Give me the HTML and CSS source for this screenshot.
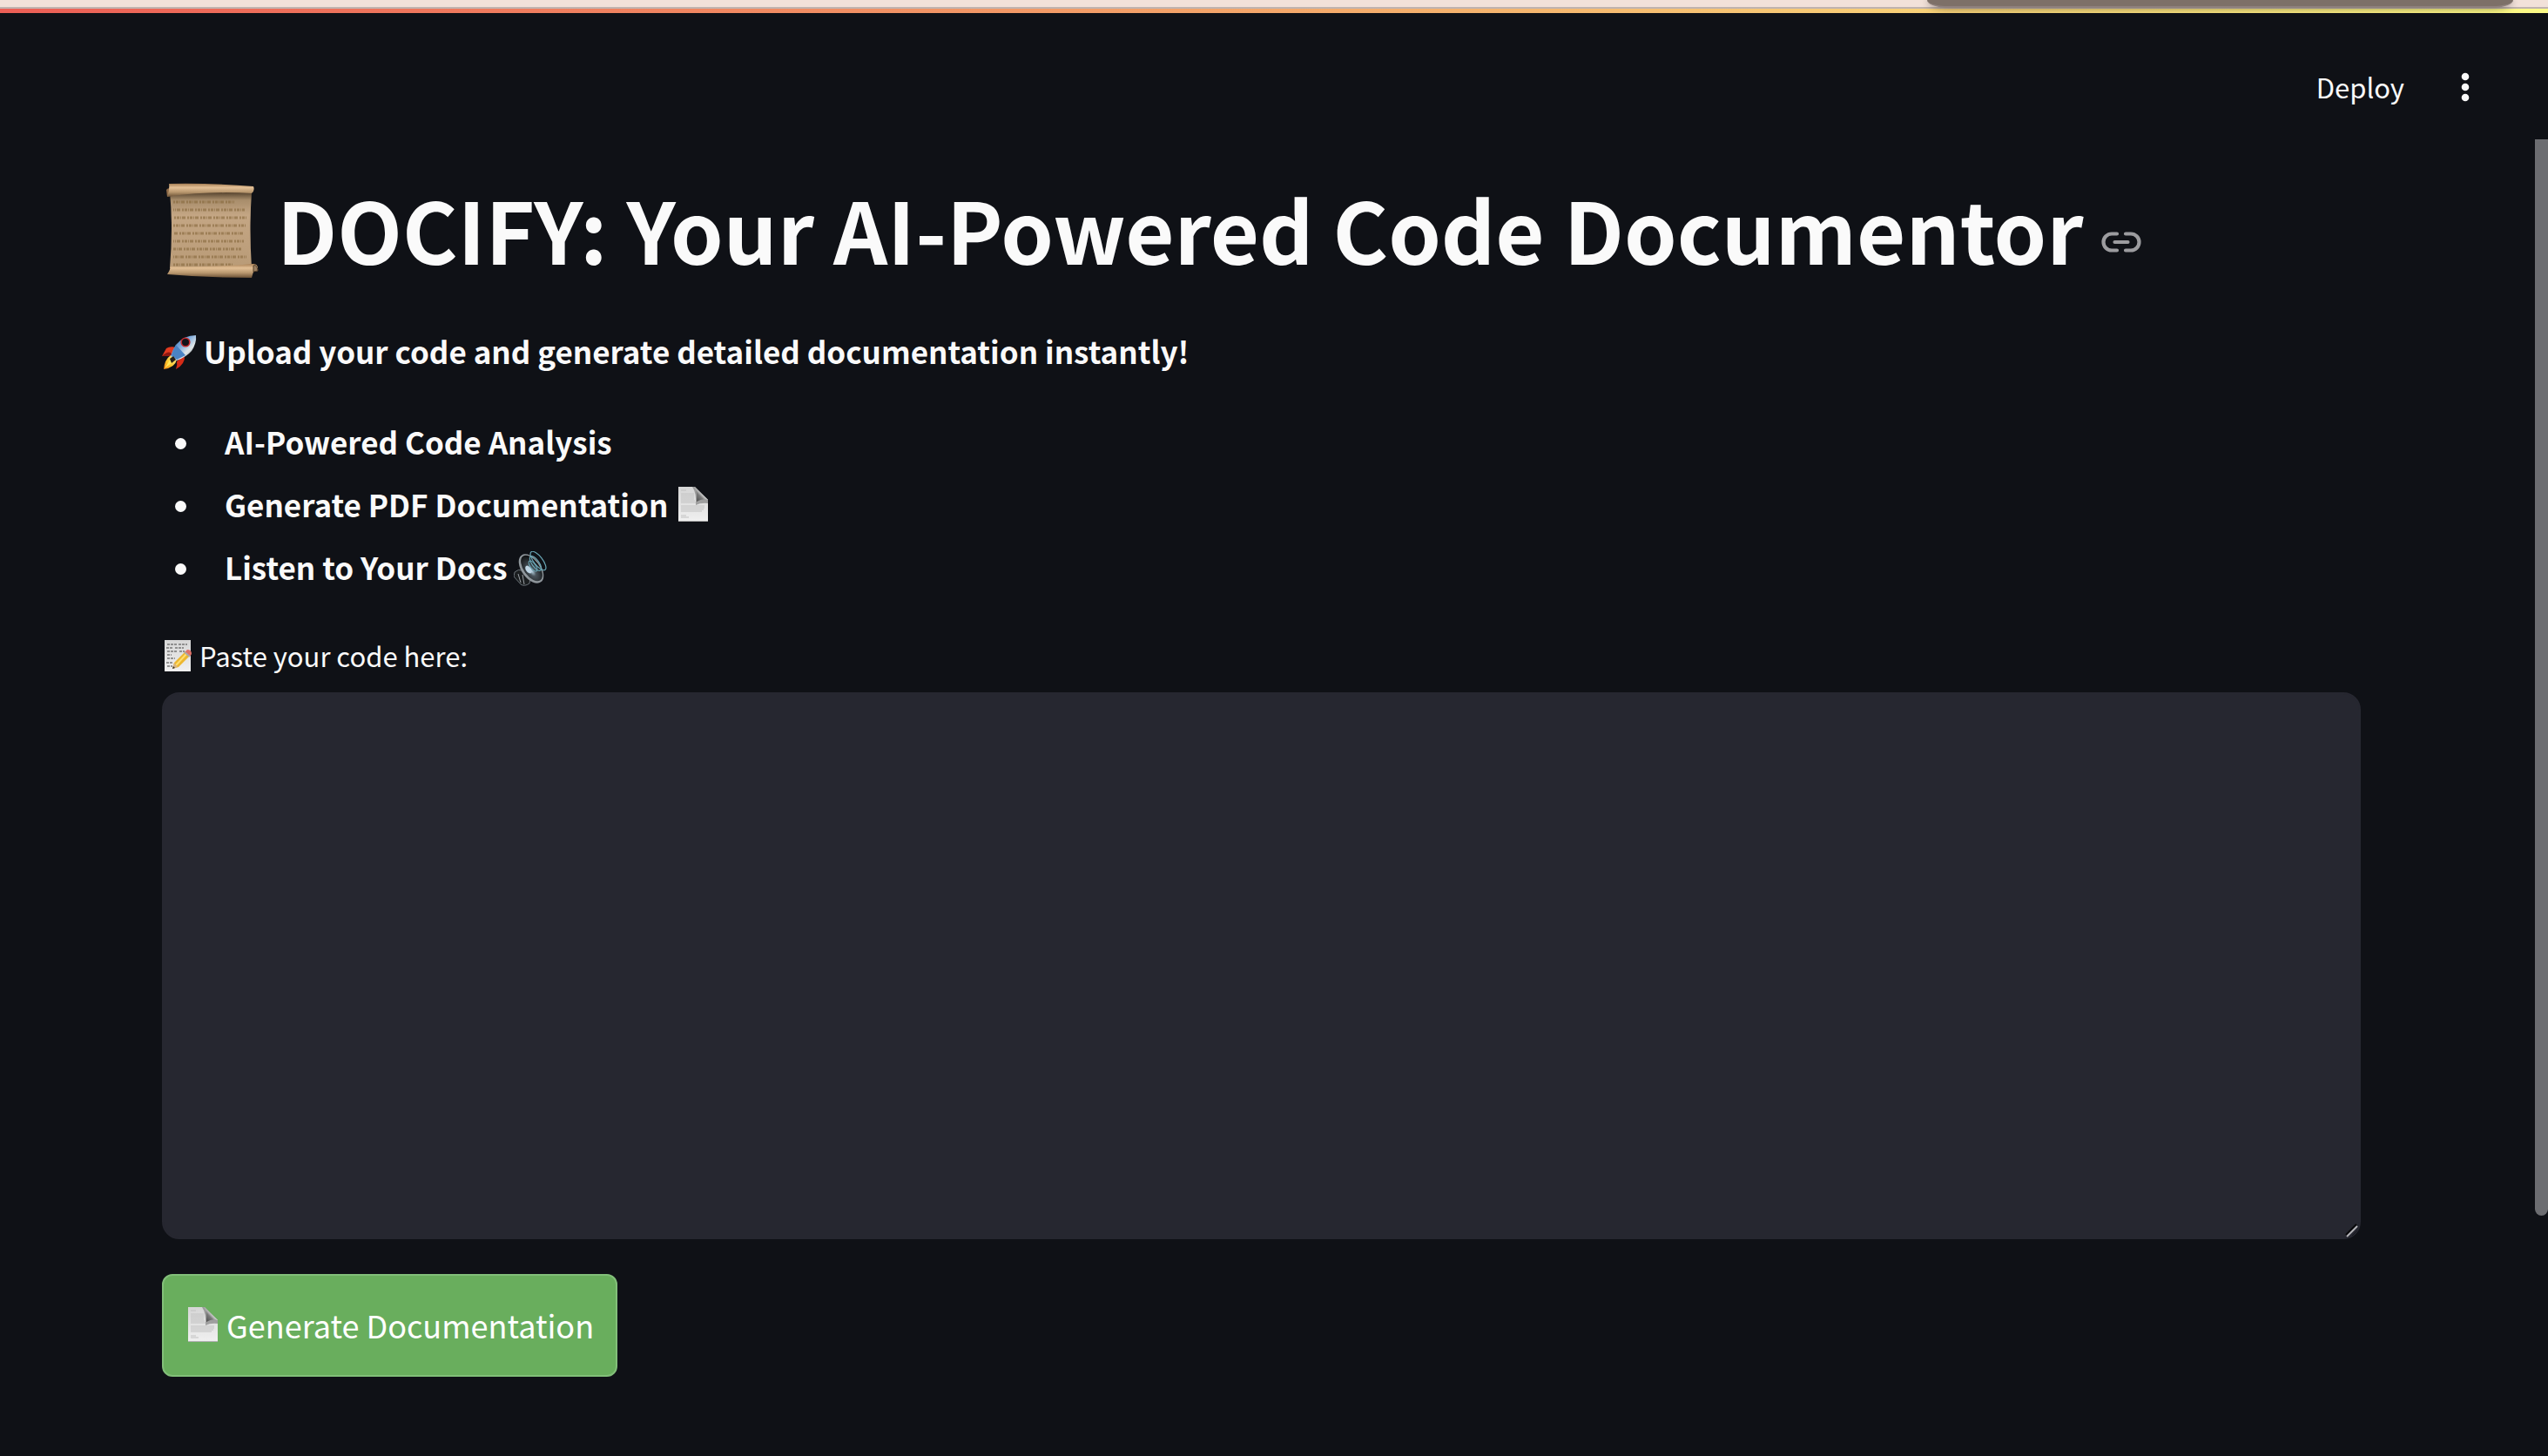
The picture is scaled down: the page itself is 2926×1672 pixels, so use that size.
FILE: index.html
```
<!DOCTYPE html>
<html lang="en">
<head>
<meta charset="utf-8">
<meta name="viewport" content="width=device-width, initial-scale=1">
<title>DOCIFY</title>
<link rel="stylesheet" href="styles.css">
</head>
<body>
<svg class="defs" aria-hidden="true">
  <defs>
    <linearGradient id="paper" x1="0" y1="0" x2="0" y2="1"><stop offset="0" stop-color="#d6d6d6"/><stop offset="1" stop-color="#f0f0f0"/></linearGradient>
    <linearGradient id="fold" x1="0" y1="1" x2="1" y2="0"><stop offset="0" stop-color="#3c3c3c"/><stop offset=".4" stop-color="#7c7c7c"/><stop offset=".6" stop-color="#f4f4f4"/><stop offset="1" stop-color="#dadada"/></linearGradient>
    <linearGradient id="rollTop" x1="0" y1="0" x2="0" y2="1"><stop offset="0" stop-color="#a57e54"/><stop offset=".3" stop-color="#e3c096"/><stop offset=".65" stop-color="#b8976e"/><stop offset="1" stop-color="#6b5136"/></linearGradient>
    <linearGradient id="parchment" x1="0" y1="0" x2="0" y2="1"><stop offset="0" stop-color="#57442f"/><stop offset=".1" stop-color="#a88d6b"/><stop offset=".3" stop-color="#c4a684"/><stop offset="1" stop-color="#b99b77"/></linearGradient>
    <linearGradient id="hull" x1="0" y1="0" x2="1" y2="1"><stop offset="0" stop-color="#2f5d9c"/><stop offset=".4" stop-color="#78a8dc"/><stop offset=".65" stop-color="#e0e6e8"/><stop offset="1" stop-color="#606a70"/></linearGradient>
    <linearGradient id="flame" x1="1" y1="0" x2="0" y2="1"><stop offset="0" stop-color="#fff09a"/><stop offset=".6" stop-color="#ffc62a"/><stop offset="1" stop-color="#e97b14"/></linearGradient>
    <radialGradient id="cone" cx=".4" cy=".6" r=".6"><stop offset="0" stop-color="#b5d2e2"/><stop offset=".3" stop-color="#4b555c"/><stop offset="1" stop-color="#101214"/></radialGradient>
    <symbol id="page" viewBox="0 0 34 40">
      <path d="M0 0H19L34 15V40H0Z" fill="url(#paper)"/>
      <path d="M3 4h6M3 8h15M3 10h15M3 12h15M3 14h15M3 16h16M3 18h17M3 22h27M3 24h27M3 26h26M3 28h24M3 33h6M3 35h9" stroke="#c2c2c2"/>
      <path d="M16 0Q21 7 20 21Q26 18 34 19V15L19 0Z" fill="#888" opacity=".75"/>
      <path d="M18 0Q22 5 21 17Q28 13 34 15Z" fill="url(#fold)"/>
      <path d="M0 39.500H34" stroke="#b0b0b0"/>
    </symbol>
  </defs>
</svg>

<div class="browser-edge"><div class="floating-panel"></div></div>
<div class="decoration"></div>

<header class="toolbar">
  <button class="deploy" type="button">Deploy</button>
  <button class="menu" type="button" aria-label="Main menu">
    <svg viewBox="0 0 40 40" fill="currentColor"><circle cx="20" cy="8" r="4.300"/><circle cx="20" cy="20" r="4.300"/><circle cx="20" cy="32" r="4.300"/></svg>
  </button>
</header>

<main class="content">
  <h1 class="title">
    <svg class="scroll-icon" viewBox="0 0 110 110" aria-hidden="true">
      <path d="M7 11H101Q98 52 101 98H7Q11 50 7 11Z" fill="url(#parchment)"/>
      <g fill="none" stroke="#87693d" stroke-width="3" stroke-dasharray="2 1 3 1 1 1 4 2" opacity=".6">
        <path d="M11 22H81"/><path d="M11 31H93" stroke-dashoffset="5"/><path d="M11 40H95" stroke-dashoffset="14"/><path d="M11 49H95"/><path d="M11 58H92" stroke-dashoffset="8"/><path d="M11 67H92" stroke-dashoffset="20"/><path d="M11 76H90" stroke-dashoffset="3"/><path d="M11 85H95" stroke-dashoffset="16"/><path d="M11 94H80"/>
      </g>
      <path d="M3 8Q5 5 8 7L8 15L4 16Z" fill="#8d6946"/>
      <path d="M6 1Q54 0 103 4Q105 9 101 12Q52 9 4 16Q7 8 6 1Z" fill="url(#rollTop)"/>
      <path d="M8 96Q57 97 102 93Q109 92 108 101L103 102L101 109Q50 109 4 105Q7 101 8 96Z" fill="url(#rollTop)"/>
      <path d="M103 95Q107 93 108 101L103 102Z" fill="#9b8062" stroke="#574029"/>
    </svg>
    <span>DOCIFY: Your AI-Powered Code Documentor</span>
    <a class="anchor" href="#top" aria-label="Link to heading">
      <svg viewBox="0 0 46 24" fill="none" stroke="currentColor" stroke-width="4.200" stroke-linecap="round"><path d="M18 2.500H12A9.500 9.500 0 0 0 12 21.500H18M28 2.500H34A9.500 9.500 0 0 1 34 21.500H28M15.500 12H30.500"/></svg>
    </a>
  </h1>

  <p class="lead">
    <svg class="emoji" viewBox="0 0 40 40" aria-hidden="true">
      <path d="M5 15Q9 12 17 14L10 24Q5 22 0 24Z" fill="#e03a20"/><path d="M17 30L26 23Q27 33 16 39Q18 34 17 30Z" fill="#d42b17"/>
      <path d="M0 24Q6 18 10 20L12 24Z" fill="#8c1912"/>
      <path d="M10 23L17 28Q15 37 2 39Q3 28 10 23Z" fill="url(#flame)"/>
      <path d="M39 0Q25 0 16 11Q12 17 10 24L17 29Q28 25 34 18Q40 9 39 0Z" fill="url(#hull)"/>
      <path d="M16 11Q13 16 11 23L17 28Q23 25 27 23Z" fill="#4b83c4"/>
      <path d="M3 38L10 27L13 24L12 31Z" fill="#ffe85a"/><path d="M9 27l4-3 3 4-5 4z" fill="#262019"/>
      <circle cx="27" cy="8" r="4.800" fill="#11131b" stroke="#c3282b" stroke-width="1.600"/>
    </svg>
    <strong>Upload your code and generate detailed documentation instantly!</strong>
  </p>

  <ul class="features">
    <li><strong>AI-Powered Code Analysis</strong></li>
    <li><strong>Generate PDF Documentation</strong><svg class="page-icon" aria-hidden="true"><use href="#page"/></svg></li>
    <li><strong>Listen to Your Docs</strong>
      <svg class="emoji speaker" viewBox="0 0 40 40" aria-hidden="true">
        <path d="M1 24Q5 20 10 22L19 31L18 37Q12 41 8 38L0 29Z" fill="#1b1e20" stroke="#697177"/>
        <path d="M5 26L8 36M10 27L12 38" stroke="#9a9fa4"/>
        <ellipse cx="20" cy="20" rx="11" ry="19" transform="rotate(-36 20 20)" fill="#8f969b"/>
        <ellipse cx="20.500" cy="19.500" rx="9" ry="17" transform="rotate(-36 20.500 19.500)" fill="url(#cone)"/>
        <ellipse cx="17" cy="21" rx="3" ry="5" transform="rotate(-36 17 21)" fill="#bfd6e5"/>
        <g fill="none" stroke="#6aa7b6" stroke-width="1.200"><ellipse cx="22" cy="17" rx="3" ry="7" transform="rotate(-36 22 17)"/><ellipse cx="25" cy="14" rx="4" ry="10" transform="rotate(-36 25 14)"/><ellipse cx="28" cy="11" rx="5" ry="13" transform="rotate(-38 28 11)"/></g>
      </svg>
    </li>
  </ul>

  <label class="field-label" for="code">
    <svg class="memo-icon" viewBox="0 0 32 36" aria-hidden="true">
      <path d="M0 0H30V36H0Z" fill="url(#paper)"/>
      <path d="M3 5h11M16 5h10M2 9h8M12 9h10M3 13h12M17 13h6M3 17h5M3 21h9M2 26h7M3 30h6" stroke="#777" stroke-width="1.400" stroke-dasharray="3 1"/>
      <path d="M9 33L11 26L24 13L29 18L16 31Z" fill="#edb72f"/><path d="M13 29L26 15" stroke="#ffdf70" stroke-width="2"/>
      <path d="M9 33L11 26L15 31Z" fill="#d7b482"/><path d="M9 33l1-3 2 2z" fill="#333"/>
      <path d="M23 14L26 11Q31 11 31 16L29 19Z" fill="#df7168"/><path d="M23 14l6 5" stroke="#aaa" stroke-width="2"/>
    </svg>
    <span>Paste your code here:</span>
  </label>
  <div class="field">
    <textarea class="code-input" id="code"></textarea>
    <svg class="grip" viewBox="0 0 16 16" aria-hidden="true"><path d="M1 13L13 1" stroke="#08080a" stroke-width="2"/><path d="M2 15L14 3" stroke="#b4b4b8" stroke-width="2"/><path d="M8 14L14 8" stroke="#17171c"/></svg>
  </div>

  <button class="generate" type="button"><svg class="page-icon" aria-hidden="true"><use href="#page"/></svg>Generate Documentation</button>
</main>
<div class="scrollbar" aria-hidden="true"></div>
</body>
</html>
```
FILE: styles.css
```
* {
  box-sizing: border-box;
}

body {
  position: relative;
  min-height: 100vh;
  margin: 0;
  background: #0f1116;
  color: #fafafa;
  font-family: "Noto Sans CJK JP", "Open Sans", sans-serif;
  font-size: 35px;
  line-height: 60px;
}

svg {
  display: block;
  flex: none;
}

button {
  font: inherit;
  color: inherit;
  cursor: pointer;
}

.defs {
  position: absolute;
  width: 0;
  height: 0;
}

/* Lower edge of the browser chrome above the app */
.browser-edge {
  position: relative;
  height: 10px;
  background: #f2e1d9;
  border-bottom: 2px solid #c0b3af;
}

.floating-panel {
  position: absolute;
  top: 0;
  right: 40px;
  width: 23%;
  height: 9px;
  background: #7d7068;
  border-bottom: 2px solid #8f817d;
  border-radius: 0 0 24px 24px / 0 0 9px 9px;
  box-shadow: 0 1px 8px #0006;
}

.decoration {
  height: 5px;
  background: linear-gradient(90deg, #ec5f56, #f5b66f 60%, #fcfb87);
}

.toolbar {
  display: flex;
  justify-content: flex-end;
  align-items: center;
  gap: 50px;
  height: 145px;
  padding: 24px 75px 0 0;
  margin-bottom: 36px;
}

.deploy,
.menu {
  padding: 0;
  border: 0;
  background: none;
}

.deploy {
  font-size: 31px;
}

.menu svg {
  width: 40px;
  height: 40px;
}

.content {
  padding: 0 215px 90px 186px;
}

.title {
  display: flex;
  align-items: center;
  margin: 0 0 45px;
  font-size: 97px;
  font-weight: 700;
  line-height: 132px;
}

.scroll-icon {
  width: 110px;
  height: 110px;
  margin: 6px 20px 0 2px;
}

.anchor {
  margin: 32px 0 0 20px;
  color: #9c9c9f;
}

.anchor svg {
  width: 46px;
  height: 24px;
}

.lead {
  display: flex;
  align-items: center;
  gap: 8px;
  margin: 0 0 44px;
}

.emoji {
  width: 40px;
  height: 40px;
  margin-top: 3px;
}

.page-icon {
  width: 34px;
  height: 40px;
}

.features {
  display: grid;
  gap: 12px;
  margin: 0 0 46px;
  padding: 0;
  list-style: none;
}

.features li {
  display: flex;
  align-items: center;
  gap: 12px;
}

.features li::before {
  content: "";
  width: 13px;
  height: 13px;
  margin: 4px 32px 0 15px;
  border-radius: 50%;
  background: currentColor;
}

.features .speaker {
  margin-left: -4px;
}

.field-label {
  display: flex;
  align-items: center;
  gap: 8px;
  margin-bottom: 16px;
  padding-left: 3px;
  font-size: 31px;
  line-height: 52px;
}

.memo-icon {
  width: 32px;
  height: 36px;
}

.field {
  position: relative;
  margin-bottom: 40px;
}

.code-input {
  display: block;
  width: 100%;
  height: 628px;
  padding: 30px;
  border: 2px solid #262730;
  border-radius: 20px;
  outline: none;
  resize: none;
  background: #262730;
  color: inherit;
  font: inherit;
}

.grip {
  position: absolute;
  right: 2px;
  bottom: 2px;
  width: 16px;
  height: 16px;
}

.generate {
  display: flex;
  align-items: center;
  gap: 10px;
  height: 118px;
  padding: 0 25px 2px 28px;
  border: 2px solid #82bf79;
  border-radius: 12px;
  background: #69ae5d;
  color: #fff;
  font-size: 36px;
}

.scrollbar {
  position: absolute;
  top: 160px;
  right: 0;
  bottom: 276px;
  width: 15px;
  border-radius: 0 0 8px 8px;
  background: #6c6d71;
}
```
